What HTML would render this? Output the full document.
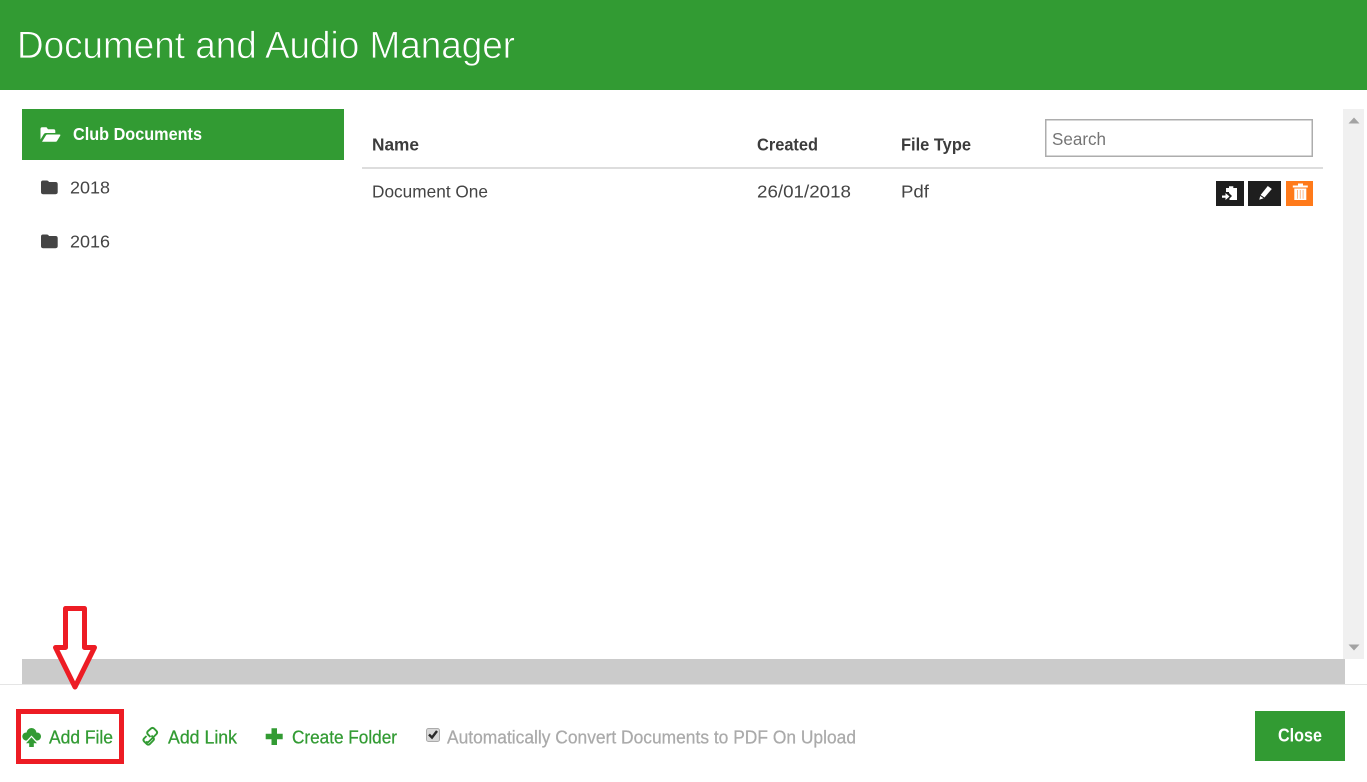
<!DOCTYPE html>
<html lang="en"><head><meta charset="utf-8"><title>Document and Audio Manager</title>
<style>
html,body{margin:0;padding:0;background:#fff;width:1367px;height:782px;overflow:hidden}
svg{display:block}
text{font-family:"Liberation Sans",sans-serif}
</style></head><body>
<svg width="1367" height="782" viewBox="0 0 1367 782" xmlns="http://www.w3.org/2000/svg">
<rect width="1367" height="90" fill="#329b33"/>
<text x="17" y="58" font-size="38" fill="#fff" stroke="#329b33" stroke-width="0.7" textLength="498" lengthAdjust="spacingAndGlyphs">Document and Audio Manager</text>

<!-- sidebar -->
<rect x="22" y="109" width="322" height="51" fill="#329b33"/>
<path d="M40.500 129Q40.500 127.300 42.300 127.300H46.500L48 129.300H53.500Q55.300 129.300 55.300 131V133H46Q44.500 133 43.700 134.200L40.500 139.500ZM42 141.800L46 135.200Q46.500 134.500 47.500 134.500H59.500Q60.800 134.500 60.200 135.700L57 141Q56.500 141.800 55.500 141.800Z" fill="#fff"/>
<text x="73" y="140" font-size="17.500" font-weight="bold" fill="#fff" textLength="129" lengthAdjust="spacingAndGlyphs">Club Documents</text>
<path d="M41 182.500Q41 180.500 43 180.500H47Q48.300 180.500 49 182H55.500Q57.700 182 57.700 184.200V192Q57.700 194.200 55.500 194.200H43Q41 194.200 41 192Z" fill="#444"/>
<text x="70" y="193.500" font-size="17.500" fill="#444" textLength="40" lengthAdjust="spacingAndGlyphs">2018</text>
<path d="M41 236.500Q41 234.500 43 234.500H47Q48.300 234.500 49 236H55.500Q57.700 236 57.700 238.200V246Q57.700 248.200 55.500 248.200H43Q41 248.200 41 246Z" fill="#444"/>
<text x="70" y="247.500" font-size="17.500" fill="#444" textLength="40" lengthAdjust="spacingAndGlyphs">2016</text>

<!-- table -->
<text x="372" y="150.500" font-size="17.500" font-weight="bold" fill="#3c3c3c" textLength="47" lengthAdjust="spacingAndGlyphs">Name</text>
<text x="757" y="150.500" font-size="17.500" font-weight="bold" fill="#3c3c3c" textLength="61" lengthAdjust="spacingAndGlyphs">Created</text>
<text x="901" y="150.500" font-size="17.500" font-weight="bold" fill="#3c3c3c" textLength="70" lengthAdjust="spacingAndGlyphs">File Type</text>
<rect x="1045.750" y="119.750" width="266.500" height="36.500" fill="#fff" stroke="#adadad" stroke-width="1.500"/>
<text x="1052" y="145" font-size="17.500" fill="#757575" textLength="54" lengthAdjust="spacingAndGlyphs">Search</text>
<rect x="362" y="167" width="961" height="2" fill="#ddd"/>
<text x="372" y="197.500" font-size="17.500" fill="#444" textLength="116" lengthAdjust="spacingAndGlyphs">Document One</text>
<text x="757" y="197.500" font-size="17.500" fill="#444" textLength="94" lengthAdjust="spacingAndGlyphs">26/01/2018</text>
<text x="901" y="197.500" font-size="17.500" fill="#444" textLength="28" lengthAdjust="spacingAndGlyphs">Pdf</text>

<!-- row buttons -->
<rect x="1216" y="181" width="28" height="25" fill="#1e1e1e"/>
<path d="M1226 188H1229V186.300H1233.300V188H1237V200H1229.500V198.500L1232 196L1229 193V192H1226Z" fill="#fff"/>
<path d="M1222 195.500H1225.500V193L1229.500 196.500L1225.500 200V197.800H1222Z" fill="#fff"/>
<rect x="1248" y="181" width="33" height="25" fill="#1e1e1e"/>
<path d="M1267.800 186L1271.800 189L1264.500 197.500L1260.600 195ZM1260.200 196L1263.600 198.200L1259.300 199.700Z" fill="#fff"/>
<rect x="1286" y="181" width="27" height="25" fill="#ff7a1a"/>
<path d="M1292.800 185.500H1298V183.500H1303V185.500H1307.800V187.500H1292.800ZM1294.300 188.500H1306.300V200H1294.300Z" fill="#fff"/>
<path d="M1297.500 190V198.800M1300.300 190V198.800M1303.100 190V198.800" stroke="#ffb888" stroke-width="1" fill="none"/>

<!-- scrollbar -->
<rect x="1343" y="109" width="21" height="550" fill="#f0f0f0"/>
<path d="M1348.500 123.500L1354 117.500L1359.500 123.500Z" fill="#a3a3a3"/>
<path d="M1348.500 644.500L1354 650.500L1359.500 644.500Z" fill="#a3a3a3"/>

<!-- grey bar and footer line -->
<rect x="22" y="659" width="1323" height="25" fill="#cbcbcb"/>
<rect x="0" y="684" width="1367" height="1" fill="#e5e5e5"/>

<!-- footer actions -->
<circle cx="26.300" cy="736.500" r="4" fill="#329b33"/>
<circle cx="31.500" cy="733" r="5" fill="#329b33"/>
<circle cx="37" cy="736.500" r="4" fill="#329b33"/>
<path d="M25 737H38V740.500H25Z" fill="#329b33"/>
<path d="M31.500 735.500L38.800 743.200H34.500V748H28.500V743.200H24.200Z" fill="#fff"/>
<path d="M31.500 737.200L37 743.300H33.800V747H29.200V743.300H26Z" fill="#329b33"/>
<text x="49" y="743.500" font-size="18" fill="#329b33" stroke="#329b33" stroke-width="0.25" textLength="64" lengthAdjust="spacingAndGlyphs">Add File</text>
<path d="M150.500 737L147.800 734.300Q146.500 732.800 147.800 731.300L151 728.500Q152.500 727.200 154 728.500L156.500 731Q157.800 732.500 156.500 734L149 741.500Q147.500 743 146 741.500L146 741.500M151.500 735.500L153.500 738Q154.500 739.300 153.300 740.500L149.800 744Q148.300 745.300 146.800 744L144 741.300Q142.800 739.800 144 738.500L146.500 736" fill="none" stroke="#329b33" stroke-width="1.900"/>
<text x="168" y="743.500" font-size="18" fill="#329b33" stroke="#329b33" stroke-width="0.25" textLength="69" lengthAdjust="spacingAndGlyphs">Add Link</text>
<path d="M271.500 728.300H277V733.800H282.700V739.300H277V745H271.500V739.300H265.700V733.800H271.500Z" fill="#329b33"/>
<text x="292" y="743.500" font-size="18" fill="#329b33" stroke="#329b33" stroke-width="0.25" textLength="105" lengthAdjust="spacingAndGlyphs">Create Folder</text>
<rect x="426.500" y="728.500" width="13" height="13" rx="2" fill="#d8d8d8" stroke="#ababab"/>
<path d="M429 734.500L432 737.500L437 731" fill="none" stroke="#2a2a2a" stroke-width="2.400"/>
<text x="447" y="743.500" font-size="18" fill="#aaa" stroke="#aaa" stroke-width="0.25" textLength="409" lengthAdjust="spacingAndGlyphs">Automatically Convert Documents to PDF On Upload</text>

<rect x="1255" y="711" width="90" height="50" fill="#329b33"/>
<text x="1278" y="741.500" font-size="18" font-weight="bold" fill="#fff" textLength="44" lengthAdjust="spacingAndGlyphs">Close</text>

<!-- red annotation -->
<rect x="18.500" y="711.500" width="103" height="50" fill="none" stroke="#ed1c24" stroke-width="5"/>
<path d="M65.500 608.500H84.500V647.500H94.500L75 687L55.500 647.500H65.500Z" fill="#fff" stroke="#ed1c24" stroke-width="5" stroke-linejoin="round"/>
</svg>
</body></html>
